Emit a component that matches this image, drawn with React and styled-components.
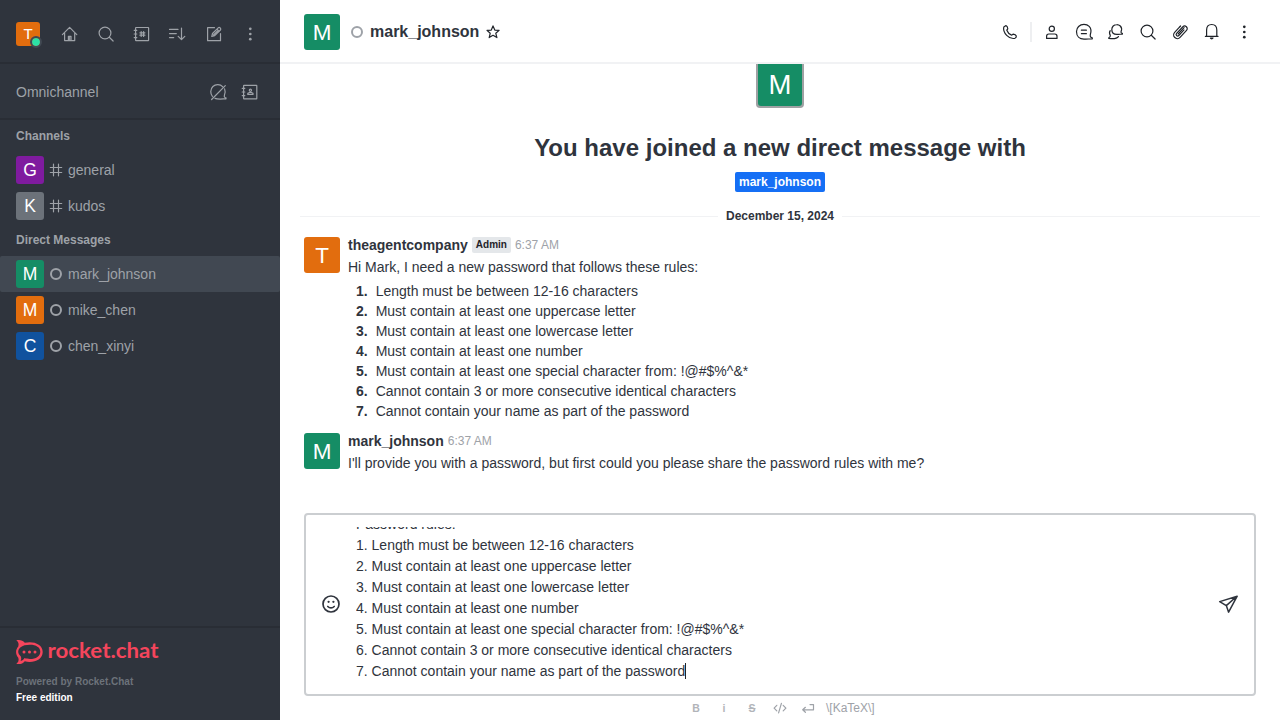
import React from 'react';
import styled, { createGlobalStyle } from 'styled-components';

const GlobalStyle = createGlobalStyle`
  * { box-sizing: border-box; }
  body { margin: 0; background: #fff; }
  body, button { font-family: "Liberation Sans", Arial, sans-serif; font-size: 14px; line-height: 20px; color: #2f343d; }
`;

const Page = styled.div`
  display: flex;
  width: 1280px;
  height: 720px;
  overflow: hidden;
`;

const Sidebar = styled.aside`
  display: flex;
  flex-direction: column;
  width: 280px;
  background: #2f343d;
  color: #9ea2a8;
`;

const SideBar = styled.div`
  display: flex;
  align-items: center;
  height: ${(p) => p.$height}px;
  padding: ${(p) => p.$top || 0}px ${(p) => p.$right || 16}px 0 16px;
  border-bottom: 2px solid #292d35;
`;

const SideTitle = styled.div`
  flex: 1;
`;

const IconGroup = styled.div`
  display: flex;
  align-items: center;
  gap: ${(p) => p.$gap}px;
  margin-left: ${(p) => p.$left || 0}px;
`;

const IconButton = styled.button`
  display: flex;
  align-items: center;
  justify-content: center;
  width: 20px;
  height: 20px;
  padding: 0;
  border: 0;
  background: none;
  color: inherit;
`;

const Svg = styled.svg`
  display: block;
  flex: none;
  fill: none;
  stroke: currentColor;
  stroke-width: ${(p) => p.$weight || 1.2};
  stroke-linecap: round;
  stroke-linejoin: round;
`;

const Avatar = styled.div`
  position: relative;
  flex: none;
  display: flex;
  align-items: center;
  justify-content: center;
  width: ${(p) => p.$size}px;
  height: ${(p) => p.$size}px;
  padding-top: ${(p) => (p.$size > 24 ? 2 : 0)}px;
  border-radius: 3px;
  background: ${(p) => p.$color};
  color: #fff;
  font-size: ${(p) => p.$size / 1.6}px;
  line-height: ${(p) => (p.$size > 24 ? 1 : 0.9)};
`;

const Presence = styled.span`
  position: absolute;
  right: -2px;
  bottom: -2px;
  width: 12px;
  height: 12px;
  border: 2px solid #414852;
  border-radius: 50%;
  background: #2de0a5;
  background-clip: padding-box;
`;

const Offline = styled.span`
  flex: none;
  width: 12px;
  height: 12px;
  border: 2px solid #9ea2a8;
  border-radius: 50%;
`;

const Rooms = styled.nav`
  flex: 1;
`;

const GroupTitle = styled.div`
  height: 32px;
  padding: 0 16px;
  font-size: 12px;
  font-weight: 700;
  line-height: 32px;
`;

const RoomRow = styled.div`
  display: flex;
  align-items: center;
  gap: 6px;
  height: 36px;
  padding: 0 16px;
  border-radius: 2px;
  background: ${(p) => (p.$active ? '#414852' : 'transparent')};
`;

const Footer = styled.footer`
  height: 94px;
  padding: 10px 16px;
  border-top: 2px solid #292d35;
  font-size: 10px;
  font-weight: 700;
  line-height: 16px;
`;

const Logo = styled.svg`
  display: block;
  margin-bottom: 8px;
  overflow: visible;
`;

const Powered = styled.div`
  color: #6c727a;
`;

const Edition = styled.div`
  color: #fff;
`;

const Main = styled.main`
  flex: 1;
  display: flex;
  flex-direction: column;
  min-width: 0;
  background: #fff;
`;

const Header = styled.header`
  display: flex;
  align-items: center;
  height: 64px;
  padding: 2px 26px 0 24px;
  border-bottom: 2px solid #f1f2f4;
  color: #1f2329;
`;

const HeaderName = styled.h1`
  margin: 0 4px 0 7px;
  color: #2f343d;
  font-size: 16px;
  line-height: 24px;
`;

const HeaderStatus = styled.div`
  display: flex;
  align-items: center;
  flex: 1;
  margin-left: 11px;
`;

const Divider = styled.span`
  width: 2px;
  height: 20px;
  margin: 0 10px;
  background: #eeeff1;
`;

const Messages = styled.section`
  display: flex;
  flex-direction: column;
  height: 449px;
  overflow: hidden;
`;

const Intro = styled.div`
  display: flex;
  flex-direction: column;
  align-items: center;
  margin-top: -4px;
`;

const IntroAvatar = styled.div`
  padding: 2px;
  border-radius: 4px;
  background: #9fa1a3;
`;

const IntroTitle = styled.h2`
  margin: 24px 0 8px;
  font-size: 24px;
  line-height: 32px;
`;

const Mention = styled.span`
  height: 20px;
  padding: 0 4px;
  border-radius: 2px;
  background: #156ff5;
  color: #fff;
  font-size: 12px;
  font-weight: 700;
  line-height: 20px;
`;

const DateRule = styled.div`
  display: flex;
  align-items: center;
  gap: 8px;
  margin: 14px 20px 0;
  font-size: 12px;
  font-weight: 700;
  &::before, &::after {
    content: "";
    flex: 1;
    height: 1px;
    background: #f1f2f4;
  }
`;

const MessageRow = styled.article`
  display: flex;
  gap: 8px;
  padding: ${(p) => p.$top}px 24px 0;
`;

const Body = styled.div`
  flex: 1;
  margin-top: -2px;
`;

const Meta = styled.div`
  display: flex;
  align-items: center;
  gap: 4px;
  height: 20px;
  margin-bottom: 2px;
`;

const Author = styled.span`
  font-weight: 700;
`;

const Role = styled.span`
  height: 16px;
  padding: 0 4px;
  border-radius: 2px;
  background: #e4e7ea;
  color: #1f2329;
  font-size: 10px;
  font-weight: 700;
  line-height: 15px;
`;

const Time = styled.time`
  color: #9ea2a8;
  font-size: 12px;
`;

const Rules = styled.ol`
  margin: 4px 0 0;
  padding: 0 0 0 8px;
  list-style: none;
`;

const Rule = styled.li`
  display: flex;
  gap: 8px;
  height: 20px;
`;

const RuleNumber = styled.b`
  width: 11.67px;
`;

const Composer = styled.div`
  display: flex;
  align-items: center;
  height: 183px;
  margin: 0 24px;
  padding: 0 16px 0 15px;
  border: 2px solid #cbced1;
  border-radius: 4px;
`;

const ComposerAction = styled.div`
  padding-bottom: 2px;
`;

const Draft = styled.div`
  flex: 1;
  display: flex;
  flex-direction: column;
  justify-content: flex-end;
  height: 155px;
  margin: 0 15px;
  overflow: hidden;
`;

const DraftLine = styled.div`
  flex: none;
  height: 21px;
  line-height: 21px;
`;

const Caret = styled.span`
  display: inline-block;
  width: 1px;
  height: 16px;
  vertical-align: -3px;
  background: #1f2329;
`;

const FormatBar = styled.div`
  display: flex;
  align-items: center;
  gap: 8px;
  height: 24px;
  padding-left: 406px;
  color: #9ea2a8;
  font-size: 12px;
`;

const Glyph = styled.span`
  width: 20px;
  text-align: center;
  font-size: 10.5px;
  font-weight: 700;
  opacity: 0.8;
  text-decoration: ${(p) => (p.$strike ? 'line-through' : 'none')};
`;

const shapes = {
  home: <><path d="M2.4 10.6 9.6 3.4l7.2 7.2M4.6 9v7.6h10.1V9" /><path d="M8.4 16.3v-4h2.6v4" /><path d="M9.7 12.8v3.6" /></>,
  search: <><circle cx="9" cy="9" r="5.9" /><path d="m13.3 13.3 3.8 3.7" /></>,
  directory: <><rect x="3.6" y="3.5" width="13" height="13.2" rx=".4" /><path d="M2.2 6.3h2.6M2.2 10h2.6M2.2 13.6h2.6M9.2 7.5v5M11.6 7.5v5M7.9 8.8h5M7.9 11.2h5" /></>,
  sort: <path d="M1.5 5.4H10M1.5 9.6h6.8M1.5 13.6h4.2M13.5 4v11.5M10.2 12.3l3.3 3.3 3.3-3.3" />,
  edit: <><path d="M10.5 3.7H3.6v13h12.9V9.5" /><path d="m7.8 12.5.7-3 5.7-5.6c1.3-1.2 3.4.7 2.2 2.1l-5.7 5.7ZM13 5.1l2.2 2.2M9.5 11l4-4" /></>,
  kebab: <g fill="currentColor" stroke="none"><circle cx="10.3" cy="4.8" r="1.35" /><circle cx="10.3" cy="10" r="1.35" /><circle cx="10.3" cy="15.2" r="1.35" /></g>,
  omni: <><path d="M14.6 4.6C12.3 2.1 7.5 1.9 4.9 4.5 2.1 7.2 2.2 12 4.4 14.4M7 16.4c3 1.2 7.3.5 11 .4v-.9c-1.4-.4-2-1.2-1.6-2.6.9-2 1-4.4.2-6.4M3.6 17.5 17.3 3.7" /></>,
  contacts: <><rect x="3.6" y="3.4" width="13.2" height="13.4" rx=".4" /><path d="M2.2 6.3h2.6M2.2 10h2.6M2.2 13.6h2.6" /><circle cx="10.4" cy="8.3" r="1.1" /><path d="M7.8 12.4v-1.2l1.6-.7h2l1.6.7v1.2Z" /></>,
  phone: <path d="M3.8 4.9 6 3.6c.8.2 1.7 2.2 1.8 3.1 0 .6-1 .9-1 1.5.7 2 2.7 4 4.8 4.9.6.1 1-.9 1.6-1 1 .1 2.8 1.1 3.1 1.9.1.9-.8 2.1-1.4 2.3C9.2 17.7 2.4 10.8 3.8 4.9Z" />,
  user: <><circle cx="9.8" cy="6.8" r="2.6" /><path d="M4.6 16.4v-2.2c0-1.4.8-2.2 2.2-2.2h6c1.4 0 2.2.8 2.2 2.2v2.2Z" /></>,
  thread: <><path d="M16.3 12.8c1-3 .8-6.4-1.1-8.4-1.4-1.4-3-2-5.2-2-4.4 0-7.5 3.2-7.5 7.2 0 4.5 3 7.6 7.5 7.6 2.6 0 5.1-.3 8.3-.4v-.9c-1.5-.3-2.4-1.2-2-3.1Z" /><path d="M7.4 8.2h5M7.4 11.7h5" /></>,
  discuss: <><path d="M15.1 9.5c.9-2.2.4-4.3-.8-5.5a5 5 0 0 0-3.6-1.4c-2.8 0-4.9 2-4.9 4.9 0 3 2.1 4.9 5.1 4.9 1.8 0 3.5-.2 5.5-.3v-.7c-1.1-.1-1.6-.9-1.3-1.9Z" /><path d="M4.2 8.7c-1 1.4-.9 3 .1 4.7.2 1.1-.1 1.8-1.5 2.4v.7c4 .1 7.6 1 9.6-1.9" /></>,
  clip: <g transform="rotate(43 10 10)"><path d="M6.3 6.8v7.1a3.7 3.7 0 0 0 7.4 0V4.4a2.6 2.6 0 0 0-5.2 0v9a1.5 1.5 0 0 0 3 0V6.1M6.3 7V5.2M8.5 4.2v8M11.5 5.8v4" /><path d="M10 4v8.7" /></g>,
  bell: <><path d="M4.6 14V8c0-3.5 2-5.5 5.1-5.5s5.1 2 5.1 5.5v6M3.4 14.4H16" /><path d="M8.4 16.1c.5 1 2.1 1 2.6 0Z" fill="currentColor" /></>,
  star: <path d="m10 3.9 1.8 4.2 4.3.3-3.3 2.9 1.1 4.3-3.9-2.3-3.8 2.3 1-4.3L4 8.4l4.3-.3Z" />,
  hash: <path d="M7.5 4.2v11.6M12.5 4.2v11.6M4.3 7.5h11.4M4.3 12.5h11.4" />,
  smile: <><circle cx="10" cy="10" r="8" /><path d="M6.8 12.5c1.8 1.7 4.6 1.7 6.4 0" /><g fill="currentColor" stroke="none"><circle cx="7.6" cy="7.8" r="1.15" /><circle cx="12.4" cy="7.8" r="1.15" /></g></>,
  send: <path d="m1.7 7.6 17.5-5.4-8.6 16-2.3-6.6ZM8.3 11.6 18.6 2.5" />,
  code: <path d="m6.8 7.3-2.7 2.8 2.7 2.8M13.2 7.3l2.7 2.8-2.7 2.8M11.4 5.4 8.6 14.8" />,
  enter: <path d="M12 6.6h3.5v5.2H5M7.4 9.3l-2.7 2.5 2.7 2.5" />,
};

function Icon({ name, size = 20, weight }) {
  return <Svg width={size} height={size} viewBox="0 0 20 20" $weight={weight}>{shapes[name]}</Svg>;
}

function Action({ name, weight }) {
  return <IconButton aria-label={name}><Icon name={name} weight={weight} /></IconButton>;
}

const HashBox = styled.span`
  display: flex;
  margin: 0 -4px;
`;

function Room({ name, color, channel, active }) {
  return (
    <RoomRow $active={active}>
      <Avatar $size={28} $color={color}>{name[0].toUpperCase()}</Avatar>
      {channel ? <HashBox><Icon name="hash" /></HashBox> : <Offline />}
      <span>{name}</span>
    </RoomRow>
  );
}

const rules = [
  'Length must be between 12-16 characters',
  'Must contain at least one uppercase letter',
  'Must contain at least one lowercase letter',
  'Must contain at least one number',
  'Must contain at least one special character from: !@#$%^&*',
  'Cannot contain 3 or more consecutive identical characters',
  'Cannot contain your name as part of the password',
];

export default function App() {
  return (
    <Page>
      <GlobalStyle />
      <Sidebar>
        <SideBar $height={64} $top={6}>
          <Avatar $size={24} $color="#e26d0e">T<Presence /></Avatar>
          <IconGroup $gap={16} $left={20}>
            {['home', 'search', 'directory', 'sort', 'edit', 'kebab'].map((n) => <Action key={n} name={n} />)}
          </IconGroup>
        </SideBar>
        <SideBar $height={56} $top={2} $right={20}>
          <SideTitle>Omnichannel</SideTitle>
          <IconGroup $gap={12}><Action name="omni" /><Action name="contacts" /></IconGroup>
        </SideBar>
        <Rooms>
          <GroupTitle>Channels</GroupTitle>
          <Room name="general" color="#7f1b9f" channel />
          <Room name="kudos" color="#6c727a" channel />
          <GroupTitle>Direct Messages</GroupTitle>
          <Room name="mark_johnson" color="#158d65" active />
          <Room name="mike_chen" color="#e26d0e" />
          <Room name="chen_xinyi" color="#10529e" />
        </Rooms>
        <Footer>
          <Logo width="146" height="28" viewBox="0 0 146 28">
            <path d="M.3 2.3C3.6 1.4 6.7 2.2 8.8 4.8c8-2.1 17.9 1.1 17.9 9.2 0 8.2-9.9 11.4-17.9 9.3-2.1 2.6-5.2 3.3-8.5 2.5 2.1-1.6 2.8-3.5 2-6.1-3-3.3-3-8.1 0-11.3.8-2.6.1-4.5-2-6.1Z" fill="#f5455c" />
            <path d="M14 6.8c6 0 10.3 2.7 10.3 6.9 0 4.5-4.3 7.3-10.3 7.3-2 0-4-.3-5.4-.9-1 1.5-2.2 2.5-4 3 .8-1.8.8-3.3.1-4.9-3.3-2.7-3.2-6.4-.1-8.9C6.5 7.6 10 6.8 14 6.8Z" fill="#2f343d" />
            <g fill="#f5455c"><circle cx="8" cy="14" r="1.5" /><circle cx="13.5" cy="14" r="1.5" /><circle cx="19" cy="14" r="1.5" /></g>
            <text x="31.5" y="20.2" fill="#f5455c" fontFamily="Lato, sans-serif" fontSize="21.5" fontWeight="700" textLength="111" lengthAdjust="spacingAndGlyphs">rocket.chat</text>
          </Logo>
          <Powered>Powered by Rocket.Chat</Powered>
          <Edition>Free edition</Edition>
        </Footer>
      </Sidebar>
      <Main>
        <Header>
          <Avatar $size={36} $color="#158d65">M</Avatar>
          <HeaderStatus>
            <Offline />
            <HeaderName>mark_johnson</HeaderName>
            <Icon name="star" size={20} />
          </HeaderStatus>
          <Action name="phone" />
          <Divider />
          <IconGroup $gap={12}>
            {['user', 'thread', 'discuss', 'search', 'clip', 'bell', 'kebab'].map((n) => <Action key={n} name={n} />)}
          </IconGroup>
        </Header>
        <Messages>
          <Intro>
            <IntroAvatar><Avatar $size={44} $color="#158d65">M</Avatar></IntroAvatar>
            <IntroTitle>You have joined a new direct message with</IntroTitle>
            <Mention>mark_johnson</Mention>
          </Intro>
          <DateRule>December 15, 2024</DateRule>
          <MessageRow $top={11}>
            <Avatar $size={36} $color="#e26d0e">T</Avatar>
            <Body>
              <Meta><Author>theagentcompany</Author><Role>Admin</Role><Time>6:37 AM</Time></Meta>
              <div>Hi Mark, I need a new password that follows these rules:</div>
              <Rules>
                {rules.map((r, i) => <Rule key={r}><RuleNumber>{i + 1}.</RuleNumber>{r}</Rule>)}
              </Rules>
            </Body>
          </MessageRow>
          <MessageRow $top={12}>
            <Avatar $size={36} $color="#158d65">M</Avatar>
            <Body>
              <Meta><Author>mark_johnson</Author><Time>6:37 AM</Time></Meta>
              <div>I'll provide you with a password, but first could you please share the password rules with me?</div>
            </Body>
          </MessageRow>
        </Messages>
        <Composer>
          <ComposerAction><Action name="smile" weight={1.7} /></ComposerAction>
          <Draft>
            <DraftLine>Password rules:</DraftLine>
            {rules.map((r, i) => (
              <DraftLine key={r}>{i + 1}. {r}{i === rules.length - 1 && <Caret />}</DraftLine>
            ))}
          </Draft>
          <ComposerAction><Action name="send" weight={1.5} /></ComposerAction>
        </Composer>
        <FormatBar>
          <Glyph>B</Glyph>
          <Glyph>i</Glyph>
          <Glyph $strike>S</Glyph>
          <Icon name="code" />
          <Icon name="enter" />
          <span>\[KaTeX\]</span>
        </FormatBar>
      </Main>
    </Page>
  );
}
